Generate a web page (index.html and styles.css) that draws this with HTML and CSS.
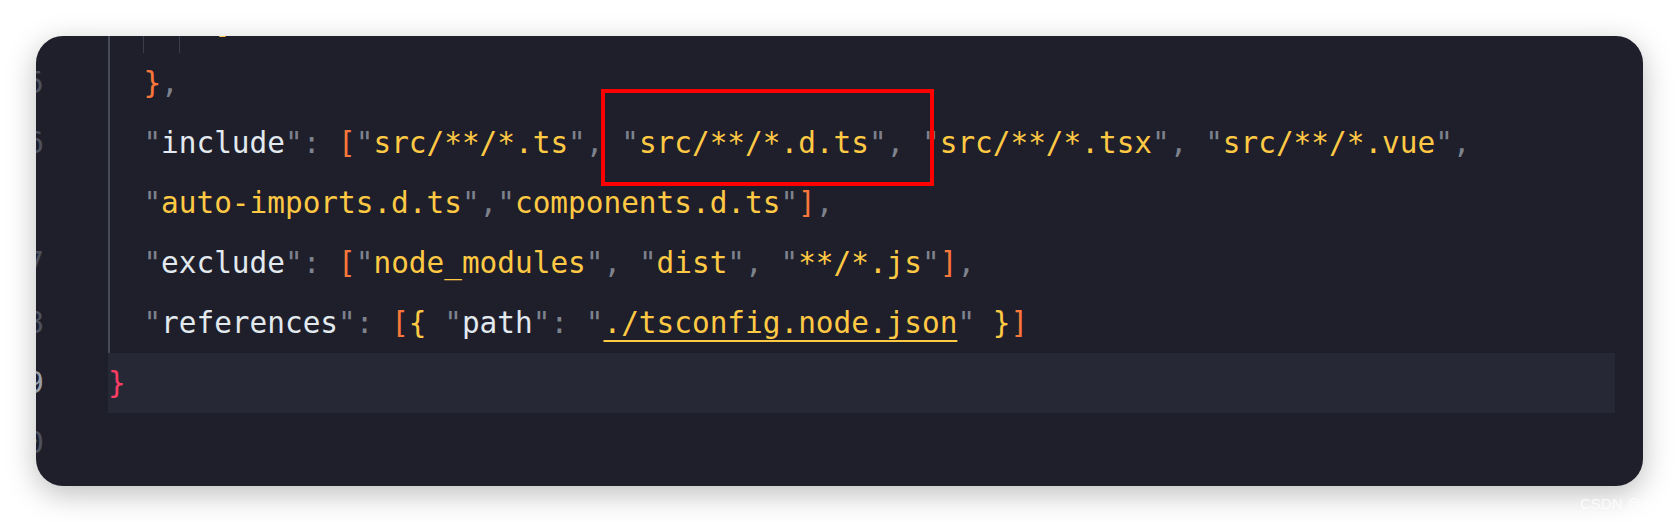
FILE: index.html
```html
<!DOCTYPE html>
<html lang="en">
<head>
<meta charset="utf-8">
<title>tsconfig.json</title>
<link rel="stylesheet" href="styles.css">
</head>
<body>
<div class="card">
  <div class="editor">
    <div class="gutter">
      <div class="ln">4</div>
      <div class="ln">5</div>
      <div class="ln">6</div>
      <div class="ln"></div>
      <div class="ln">7</div>
      <div class="ln">8</div>
      <div class="ln cur">9</div>
      <div class="ln">10</div>
    </div>
    <div class="code">
      <div class="row guide"><span class="ind"></span><span class="ind g"></span><span class="ind g"></span><span class="b2">]</span></div>
      <div class="row guide"><span class="ind"></span><span class="b1">}</span><span class="p">,</span></div>
      <div class="row guide"><span class="ind"></span><span class="p">"</span><span class="k">include</span><span class="p">": </span><span class="b1">[</span><span class="p">"</span><span class="s">src/**/*.ts</span><span class="p">", "</span><span class="s">src/**/*.d.ts</span><span class="p">", "</span><span class="s">src/**/*.tsx</span><span class="p">", "</span><span class="s">src/**/*.vue</span><span class="p">",</span></div>
      <div class="row guide"><span class="ind"></span><span class="p">"</span><span class="s">auto-imports.d.ts</span><span class="p">","</span><span class="s">components.d.ts</span><span class="p">"</span><span class="b1">]</span><span class="p">,</span></div>
      <div class="row guide"><span class="ind"></span><span class="p">"</span><span class="k">exclude</span><span class="p">": </span><span class="b1">[</span><span class="p">"</span><span class="s">node_modules</span><span class="p">", "</span><span class="s">dist</span><span class="p">", "</span><span class="s">**/*.js</span><span class="p">"</span><span class="b1">]</span><span class="p">,</span></div>
      <div class="row guide"><span class="ind"></span><span class="p">"</span><span class="k">references</span><span class="p">": </span><span class="b1">[</span><span class="b2">{</span><span class="p"> "</span><span class="k">path</span><span class="p">": "</span><span class="s link">./tsconfig.node.json</span><span class="p">" </span><span class="b2">}</span><span class="b1">]</span></div>
      <div class="row active"><span class="b0">}</span></div>
      <div class="row"></div>
    </div>
  </div>
  <div class="mark"></div>
</div>
<div class="watermark">CSDN @zhu</div>
</body>
</html>
```

FILE: styles.css
```css
html, body {
  margin: 0;
  background: #ffffff;
}

body {
  padding: 36px 35px 0 36px;
  position: relative;
  height: 522px;
  box-sizing: border-box;
  overflow: hidden;
}

.card {
  position: relative;
  height: 450px;
  background: #1e1f2b;
  border-radius: 27px;
  overflow: hidden;
  box-shadow: 0 8px 30px rgba(0, 0, 0, 0.26);
}

.editor {
  display: flex;
  gap: 64px;
  margin-top: -43px;
  padding-right: 28px;
  font-family: "DejaVu Sans Mono", "Liberation Mono", monospace;
  font-size: 29.4px;
  line-height: 60px;
}

.gutter {
  width: 40px;
  margin-left: -32px;
  text-align: right;
  color: #4d505d;
}

.ln {
  height: 60px;
}

.ln.cur {
  color: #9a9ea8;
}

.code {
  flex: 1;
  min-width: 0;
}

.row {
  height: 60px;
  white-space: pre;
}

.row.guide {
  box-shadow: inset 2px 0 0 #474a57;
}

.row.active {
  background: #262835;
}

.ind {
  display: inline-block;
  width: 2ch;
  height: 60px;
  vertical-align: top;
}

.ind.g {
  box-shadow: inset 1px 0 0 #3a3d49;
}

.p { color: #7d828d; }
.k { color: #e2e9ef; }
.s { color: #ffc944; }
.b0 { color: #ff3d64; }
.b1 { color: #f9773a; }
.b2 { color: #ffc944; }

.link {
  text-decoration: underline;
  text-decoration-thickness: 2px;
  text-underline-offset: 7px;
}

.mark {
  position: absolute;
  left: 565px;
  top: 53px;
  width: 333px;
  height: 97px;
  box-sizing: border-box;
  border: 4px solid #ff0000;
}

.watermark {
  position: absolute;
  left: 1580px;
  top: 495px;
  font-family: "Liberation Sans", Arial, sans-serif;
  font-size: 15px;
  color: rgba(255, 255, 255, 0.85);
}
```
